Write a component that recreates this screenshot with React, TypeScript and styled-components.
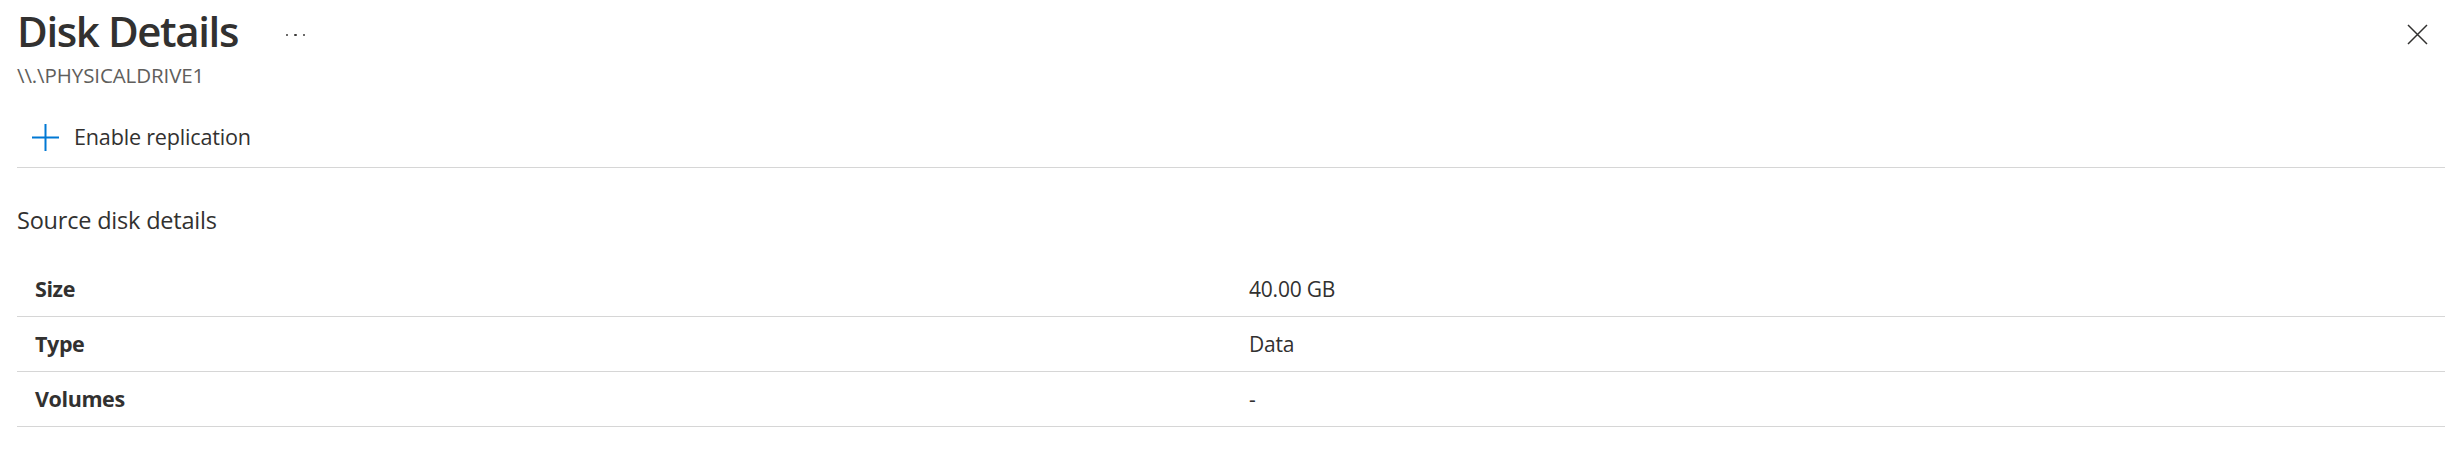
import React from "react";
import styled, { createGlobalStyle } from "styled-components";

const GlobalStyle = createGlobalStyle`
  html, body { margin: 0; padding: 0; background: #ffffff; }
  body { font-family: "Open Sans", "Noto Sans", "Liberation Sans", sans-serif; color: #323130; }
  * { box-sizing: border-box; }
`;

const Page = styled.div`
  display: flex;
  flex-direction: column;
  padding: 0 10px 0 17px;
  width: 2455px;
`;

const Header = styled.div`
  display: flex;
  align-items: flex-start;
`;

const TitleBlock = styled.div`
  display: flex;
  flex-direction: column;
  padding-top: 3px;
`;

const TitleRow = styled.div`
  display: flex;
  align-items: flex-start;
`;

const Title = styled.h1`
  margin: 0;
  font-size: 42px;
  font-weight: 600;
  line-height: 56px;
  color: #323130;
  letter-spacing: -1.4px;
`;

const MoreButton = styled.button`
  display: flex;
  align-items: center;
  justify-content: center;
  gap: 6px;
  margin: 30px 0 0 48px;
  padding: 0;
  border: 0;
  background: none;
  height: 4px;
`;

const Dot = styled.span`
  width: 2.5px;
  height: 2.5px;
  border-radius: 50%;
  background: #3b3a39;
`;

const Subtitle = styled.div`
  margin-top: 4px;
  font-size: 20.5px;
  line-height: 24px;
  color: #605e5c;
  letter-spacing: -0.1px;
`;

const Spacer = styled.div`
  flex: 1;
`;

const CloseButton = styled.button`
  display: flex;
  align-items: center;
  justify-content: center;
  margin: 24px 17px 0 0;
  padding: 0;
  border: 0;
  background: none;
  width: 21px;
  height: 21px;
`;

const Toolbar = styled.div`
  display: flex;
  align-items: center;
  gap: 15px;
  height: 61px;
  margin-top: 20px;
  padding-left: 15px;
  border-bottom: 1px solid #d6d6d6;
`;

const ToolbarLabel = styled.span`
  font-size: 21.6px;
  line-height: 22px;
  color: #323130;
  letter-spacing: -0.2px;
`;

const SectionTitle = styled.h2`
  margin: 36px 0 0 0;
  font-size: 23.5px;
  font-weight: 400;
  line-height: 32px;
  color: #323130;
  letter-spacing: -0.2px;
`;

const Table = styled.div`
  display: flex;
  flex-direction: column;
  margin-top: 26px;
`;

const Row = styled.div`
  display: grid;
  grid-template-columns: 1fr 1fr;
  align-items: center;
  height: 55px;
  border-bottom: 1px solid #d6d6d6;
`;

const Cell = styled.div<{ $bold?: boolean }>`
  padding-left: 18px;
  font-size: ${(p) => (p.$bold ? "21.5px" : "21px")};
  line-height: 22px;
  font-weight: ${(p) => (p.$bold ? 700 : 400)};
  color: #323130;
  letter-spacing: ${(p) => (p.$bold ? "-0.4px" : "-0.2px")};
`;

const rows = [
  { label: "Size", value: "40.00 GB" },
  { label: "Type", value: "Data" },
  { label: "Volumes", value: "-" },
];

export default function App() {
  return (
    <>
      <GlobalStyle />
      <Page>
        <Header>
          <TitleBlock>
            <TitleRow>
              <Title>Disk Details</Title>
              <MoreButton aria-label="More">
                <Dot />
                <Dot />
                <Dot />
              </MoreButton>
            </TitleRow>
            <Subtitle>\\.\PHYSICALDRIVE1</Subtitle>
          </TitleBlock>
          <Spacer />
          <CloseButton aria-label="Close">
            <svg width="21" height="21" viewBox="0 0 21 21">
              <path d="M1 1 L20 20 M20 1 L1 20" stroke="#323130" strokeWidth="1.5" fill="none" />
            </svg>
          </CloseButton>
        </Header>
        <Toolbar>
          <svg width="27" height="27" viewBox="0 0 27 27">
            <path d="M13.5 0 V27 M0 13.5 H27" stroke="#0078d4" strokeWidth="2" fill="none" />
          </svg>
          <ToolbarLabel>Enable replication</ToolbarLabel>
        </Toolbar>
        <SectionTitle>Source disk details</SectionTitle>
        <Table>
          {rows.map((r) => (
            <Row key={r.label}>
              <Cell $bold>{r.label}</Cell>
              <Cell>{r.value}</Cell>
            </Row>
          ))}
        </Table>
      </Page>
    </>
  );
}
